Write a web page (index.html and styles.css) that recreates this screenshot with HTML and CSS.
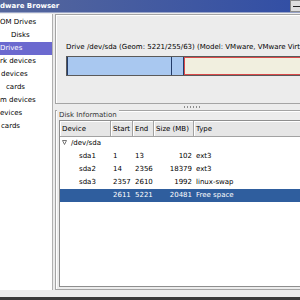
FILE: index.html
```html
<!DOCTYPE html>
<html lang="en">
<head>
  <meta charset="UTF-8" />
  <meta name="viewport" content="width=device-width, initial-scale=1.0"/>
  <title>Hardware Browser</title>
  <link rel="stylesheet" href="styles.css">
</head>
<body>

  <div class="window">

    <!-- Title bar -->
    <div class="titlebar">
      <span class="title">dware Browser</span>
      <div class="win-buttons">
        <span class="win-btn minimize"></span>
        <span class="win-btn"></span>
        <span class="win-btn"></span>
      </div>
    </div>

    <div class="main">

      <!-- Device categories -->
      <ul class="device-list">
        <li>OM Drives</li>
        <li class="indent-lg">Disks</li>
        <li class="selected">Drives</li>
        <li>rk devices</li>
        <li class="indent-sm">devices</li>
        <li class="indent-md">cards</li>
        <li>m devices</li>
        <li>evices</li>
        <li class="indent-sm">cards</li>
      </ul>

      <div class="details">

        <!-- Drive graph -->
        <div class="frame drive-frame">
          <div class="drive-label">Drive /dev/sda (Geom: 5221/255/63) (Model: VMware, VMware Virtual S)</div>
          <div class="drive-bar">
            <div class="part used" style="width: 0.25%"></div>
            <div class="part used" style="width: 44.6%"></div>
            <div class="part used" style="width: 4.9%"></div>
            <div class="part free" style="width: 50.25%"></div>
          </div>
        </div>

        <div class="handle"></div>

        <!-- Disk information -->
        <div class="frame info-frame">
          <span class="frame-label">Disk Information</span>
          <div class="table-wrap">
            <table class="disk-table">
              <tr>
                <th class="col-device">Device</th>
                <th class="col-start">Start</th>
                <th class="col-end">End</th>
                <th class="col-size">Size (MB)</th>
                <th>Type</th>
              </tr>
              <tr>
                <td class="disk">
                  <svg class="expander" width="5" height="5" viewBox="0 0 5 5"><polygon points="0.5,0.5 4.5,0.5 2.5,4.5" fill="#fff" stroke="#555" stroke-width="0.8"/></svg>/dev/sda
                </td>
                <td></td><td></td><td></td><td></td>
              </tr>
              <tr>
                <td class="part-name">sda1</td><td>1</td><td>13</td><td class="num">102</td><td>ext3</td>
              </tr>
              <tr>
                <td class="part-name">sda2</td><td>14</td><td>2356</td><td class="num">18379</td><td>ext3</td>
              </tr>
              <tr>
                <td class="part-name">sda3</td><td>2357</td><td>2610</td><td class="num">1992</td><td>linux-swap</td>
              </tr>
              <tr class="selected">
                <td class="part-name"></td><td>2611</td><td>5221</td><td class="num">20481</td><td>Free space</td>
              </tr>
            </table>
          </div>
        </div>

      </div>
    </div>
  </div>

</body>
</html>
```

FILE: styles.css
```css
* {
  box-sizing: border-box;
}

body {
  margin: 0;
  width: 300px;
  height: 300px;
  overflow: hidden;
  background: #3a3a3a;
  font-family: "DejaVu Sans", sans-serif;
  font-size: 7px;
  color: #000;
}

.window {
  width: 328px;
  height: 297px;
  display: flex;
  flex-direction: column;
  background: #ececec;
}

/* Title bar */
.titlebar {
  height: 13px;
  display: flex;
  align-items: flex-start;
  background: linear-gradient(to right, #56679c, #2e4ca6);
  border-bottom: 1px solid #9aa5c8;
  color: #fff;
}

.title {
  line-height: 12px;
  font-weight: bold;
}

.win-buttons {
  margin-left: auto;
  display: flex;
  gap: 1px;
}

.win-btn {
  width: 12px;
  height: 12px;
  background: #dedede;
  border: 1px solid #8a8a8a;
  display: flex;
  align-items: center;
  justify-content: center;
}

.win-btn.minimize::after {
  content: "";
  width: 7px;
  height: 1px;
  margin-top: 1px;
  background: #222;
}

/* Main area */
.main {
  flex: 1;
  display: flex;
  gap: 2px;
  padding: 1px 0 7px;
}

.device-list {
  width: 53px;
  margin: 0;
  padding: 2px 0 0;
  list-style: none;
  background: #fff;
  border-right: 1px solid #b0b0b0;
  overflow: hidden;
}

.device-list li {
  height: 13px;
  line-height: 13px;
  white-space: nowrap;
}

.device-list li.indent-sm { padding-left: 1px; }
.device-list li.indent-md { padding-left: 6px; }
.device-list li.indent-lg { padding-left: 11px; }

.device-list li.selected {
  background: #6b69cf;
  color: #fff;
}

.details {
  flex: 1;
  display: flex;
  flex-direction: column;
}

.frame {
  border: 1px solid #a4a4a4;
  box-shadow: inset 1px 1px 0 #fff;
}

.drive-frame {
  height: 90px;
  display: flex;
  flex-direction: column;
  justify-content: center;
  padding-left: 10px;
}

.drive-label {
  line-height: 10px;
  margin-bottom: 4px;
  white-space: nowrap;
}

.drive-bar {
  width: 236px;
  height: 20px;
  display: flex;
  border: 1px solid #5a5a5a;
}

.part.used {
  background: #a9c8f0;
  border-right: 1px solid #233b68;
}

.part.free {
  background: #f1efdf;
  border: 1px solid #d94a4a;
}

.handle {
  height: 6px;
  display: flex;
  justify-content: center;
  align-items: center;
}

.handle::before {
  content: "";
  width: 16px;
  height: 2px;
  margin-top: -1px;
  background: repeating-linear-gradient(to right, #8c8c8c 0 1px, transparent 1px 3px);
}

.info-frame {
  flex: 1;
  display: flex;
  flex-direction: column;
  padding: 0 3px 2px;
}

.frame-label {
  align-self: flex-start;
  margin: -1px 0 0 -2px;
  padding: 0 2px;
  line-height: 10px;
  background: #ececec;
  color: #333;
}

.table-wrap {
  flex: 1;
  background: #fff;
  border: 1px solid #8e8e8e;
  overflow: hidden;
}

.disk-table {
  width: 100%;
  border-collapse: separate;
  border-spacing: 0;
  table-layout: fixed;
  white-space: nowrap;
}

.disk-table th {
  height: 16px;
  padding: 0 2px;
  text-align: left;
  font-weight: normal;
  background: #e6e6e6;
  border-right: 1px solid #a2a2a2;
  border-bottom: 1px solid #a2a2a2;
  box-shadow: inset 1px 1px 0 #fff;
}

.col-device { width: 51px; }
.col-start { width: 22px; }
.col-end { width: 21px; }
.col-size { width: 40px; }

.disk-table td {
  height: 13px;
  line-height: 13px;
  padding: 0 2px;
}

.disk-table td.num {
  text-align: right;
}

.disk-table td.disk {
  padding-left: 2px;
}

.expander {
  margin-right: 4px;
  vertical-align: 0;
}

.disk-table td.part-name {
  padding-left: 19px;
}

.disk-table tr.selected td {
  background: #2f5e9e;
  color: #fff;
}
```
